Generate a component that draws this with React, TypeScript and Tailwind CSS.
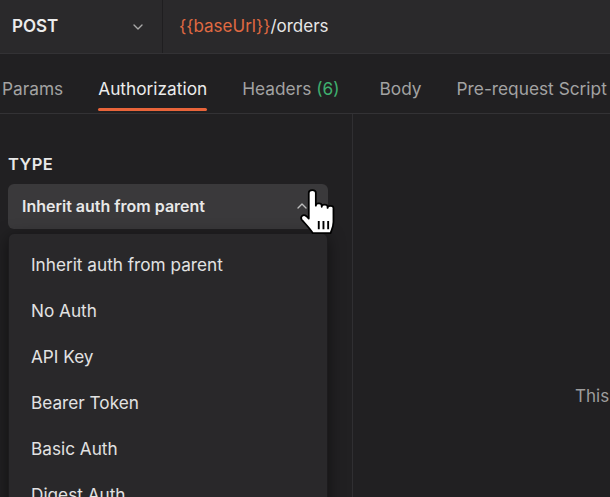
import { ChevronDown, ChevronUp } from 'lucide-react'

const authTypes = [
  'Inherit auth from parent',
  'No Auth',
  'API Key',
  'Bearer Token',
  'Basic Auth',
  'Digest Auth',
]

function HandCursor() {
  return (
    <svg width="40" height="47" viewBox="0 0 32 40" className="absolute left-[297px] top-[188px]">
      <path
        d="M9 4 C9 1 15 1 15 4 L15 15 C15 12.5 20 12.5 20 15 L20 16 C20 13.5 25 13.5 25 16 L25 17 C25 14.5 30 14.5 30 17 L30 29 C30 33 28.5 35.5 27.5 38.5 L12.5 38.5 C10.5 35 7 31.5 3 27 C1.5 25 4 21.5 7 24 L9 26 Z"
        fill="#fff"
        stroke="#000"
        strokeWidth="1.5"
        strokeLinejoin="round"
      />
      <path d="M17.5 28 V35 M21.5 28 V35 M25.5 28 V35" stroke="#000" strokeWidth="1.6" />
    </svg>
  )
}

export default function App() {
  const tabs = ['Params', 'Authorization', 'Headers', 'Body', 'Pre-request Script']

  return (
    <div className="relative w-[610px] h-[497px] overflow-hidden bg-[#212022] text-[#e6e6e6] font-['Inter',sans-serif]">
      {/* Request line */}
      <div className="flex h-[54px] bg-[#2a292b] border-b border-[#333235]">
        <div className="flex items-center justify-between w-[163px] pl-3 pr-[16px] border-r border-[#1f1e20]">
          <span className="text-[17px] font-semibold text-[#ececec]">POST</span>
          <ChevronDown size={16} strokeWidth={2} className="text-[#a9a9a9]" />
        </div>
        <div className="flex items-center pl-[16px] text-[17px]">
          <span className="text-[#e06a42]">{'{{baseUrl}}'}</span>
          <span className="text-[#e6e6e6]">/orders</span>
        </div>
      </div>

      {/* Tabs */}
      <div className="flex h-[60px] gap-[35px] pl-[2px] border-b border-[#333235] whitespace-nowrap">
        {tabs.map((tab) => (
          <div
            key={tab}
            className={`relative flex items-center pt-[10px] text-[17.3px] ${tab === 'Body' ? 'ml-[5px]' : ''}`}
          >
            <span className={tab === 'Authorization' ? 'text-[#ececec]' : 'text-[#a3a3a3]'}>
              {tab}
              {tab === 'Headers' && <span className="text-[#3fae6e]"> (6)</span>}
            </span>
            {tab === 'Authorization' && (
              <div className="absolute left-0 right-0 bottom-[2px] h-[3px] rounded-full bg-[#e8643a]" />
            )}
          </div>
        ))}
      </div>

      <div className="flex h-full">
        {/* Auth type panel */}
        <div className="w-[353px] shrink-0 border-r border-[#302f32] pl-2 pr-6 pt-[42px]">
          <div className="text-[16.5px] font-semibold tracking-wide text-[#e8e8e8] leading-none">TYPE</div>
          <div className="mt-[11px] flex items-center justify-between h-[45px] rounded-md bg-[#3a393b] pl-[14px] pr-[18px]">
            <span className="text-[16px] font-semibold text-[#e8e8e8]">Inherit auth from parent</span>
            <ChevronUp size={16} strokeWidth={2} className="text-[#bdbdbd]" />
          </div>
          <div className="mt-[4px] rounded-md bg-[#29282a] border border-[#1c1b1d] shadow-[0_4px_16px_rgba(0,0,0,0.5)] pt-[8px] pl-[22px]">
            {authTypes.map((item) => (
              <div key={item} className="h-[46px] flex items-center text-[17.2px] text-[#e2e2e2]">
                {item}
              </div>
            ))}
          </div>
        </div>

        {/* Empty state */}
        <div className="flex-1 overflow-hidden pl-[222px] pt-[270px] whitespace-nowrap text-[17px] text-[#9d9d9d]">
          This request is using an authorization helper from the parent
        </div>
      </div>

      <HandCursor />
    </div>
  )
}
